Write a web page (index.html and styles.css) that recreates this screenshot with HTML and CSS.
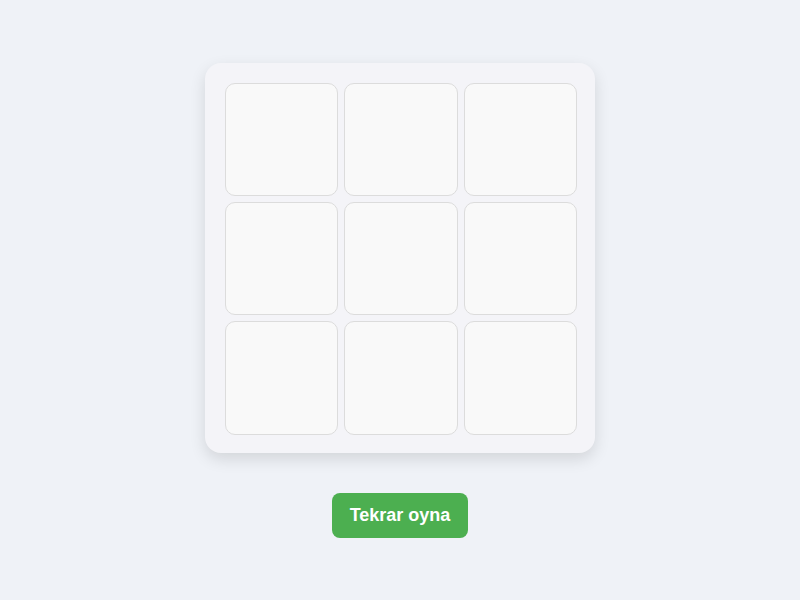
FILE: index.html
```html
<!DOCTYPE html>
<html lang="tr">
<head>
    <meta charset="UTF-8">
    <meta name="viewport" content="width=device-width, initial-scale=1.0">
    <title>XOX</title>
    <link rel="stylesheet" href="styles.css">
</head>
<body>

    <!-- Oyun tahtası -->
    <div class="board">
        <div class="cell"></div>
        <div class="cell"></div>
        <div class="cell"></div>
        <div class="cell"></div>
        <div class="cell"></div>
        <div class="cell"></div>
        <div class="cell"></div>
        <div class="cell"></div>
        <div class="cell"></div>
    </div>

    <button class="restart">Tekrar oyna</button>

</body>
</html>
```

FILE: styles.css
```css
body {
    font-family: "Liberation Sans", Arial, sans-serif;
    margin: 0;
    min-height: 100vh;
    background-color: #eff2f7;
    display: flex;
    flex-direction: column;
    align-items: center;
    justify-content: center;
}
.board {
    box-sizing: border-box;
    width: 390px;
    height: 390px;
    padding: 20px 18px 18px 20px;
    display: grid;
    grid-template-columns: repeat(3, 1fr);
    grid-template-rows: repeat(3, 1fr);
    gap: 6px;
    background-color: #f4f4f8;
    border-radius: 16px;
    box-shadow: 0 6px 16px rgba(0, 0, 0, 0.12);
}
.cell {
    background-color: #f9f9f9;
    border: 1px solid #dcdcdc;
    border-radius: 10px;
}
.restart {
    margin-top: 40px;
    padding: 12px 18px;
    font-family: inherit;
    font-size: 18px;
    font-weight: bold;
    line-height: 21px;
    color: white;
    background-color: #4caf50;
    border: none;
    border-radius: 8px;
    cursor: pointer;
}
.restart:hover {
    background-color: #43a047;
}
```
